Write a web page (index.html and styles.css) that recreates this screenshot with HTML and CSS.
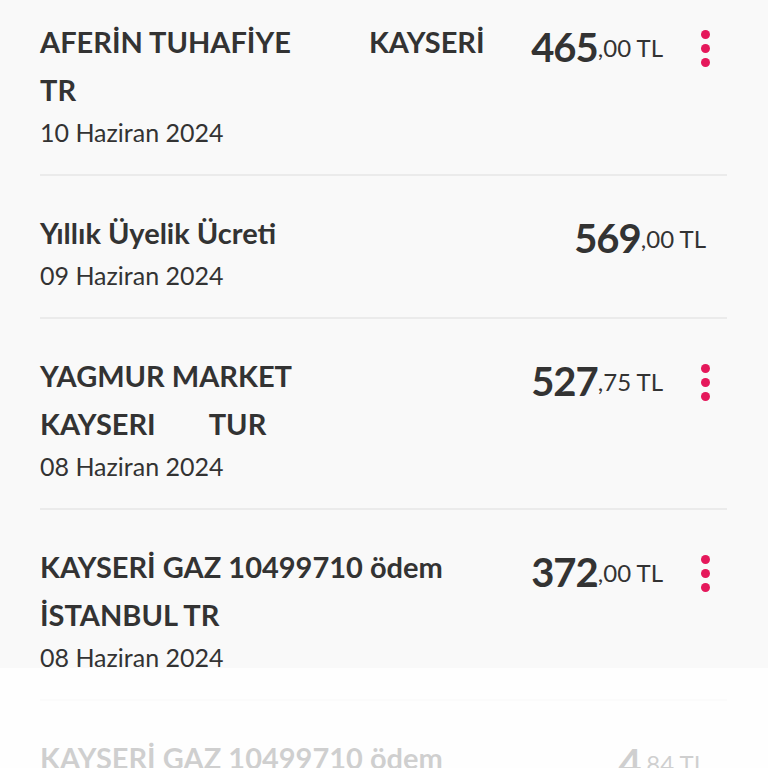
FILE: index.html
```html
<!DOCTYPE html>
<html lang="tr">
<head>
<meta charset="utf-8">
<link rel="stylesheet" href="styles.css">
</head>
<body>
<div class="screen">
  <ul class="list">
    <li class="row">
      <div class="info">
        <div class="title">AFERİN TUHAFİYE<span class="sp"></span>KAYSERİ<br>TR</div>
        <div class="date">10 Haziran 2024</div>
      </div>
      <div class="amount"><span class="int">465</span><span class="dec">,00 TL</span></div>
      <button class="more" aria-label="Diğer"><i></i><i></i><i></i></button>
    </li>
    <li class="row">
      <div class="info">
        <div class="title">Yıllık Üyelik Ücreti</div>
        <div class="date">09 Haziran 2024</div>
      </div>
      <div class="amount solo"><span class="int">569</span><span class="dec">,00 TL</span></div>
    </li>
    <li class="row">
      <div class="info">
        <div class="title">YAGMUR MARKET<br>KAYSERI<span class="sp2"></span>TUR</div>
        <div class="date">08 Haziran 2024</div>
      </div>
      <div class="amount"><span class="int">527</span><span class="dec">,75 TL</span></div>
      <button class="more" aria-label="Diğer"><i></i><i></i><i></i></button>
    </li>
    <li class="row">
      <div class="info">
        <div class="title">KAYSERİ GAZ 10499710 ödem<br>İSTANBUL TR</div>
        <div class="date">08 Haziran 2024</div>
      </div>
      <div class="amount"><span class="int">372</span><span class="dec">,00 TL</span></div>
      <button class="more" aria-label="Diğer"><i></i><i></i><i></i></button>
    </li>
    <li class="row">
      <div class="info">
        <div class="title">KAYSERİ GAZ 10499710 ödem<br>İSTANBUL TR</div>
        <div class="date">08 Haziran 2024</div>
      </div>
      <div class="amount solo"><span class="int">4</span><span class="dec">,84 TL</span></div>
    </li>
  </ul>
  <div class="fade"></div>
</div>
</body>
</html>
```
FILE: styles.css
```css
* { box-sizing: border-box; }
html, body { margin: 0; padding: 0; }
body {
  background: #f9f9f9;
  font-family: Lato, "Noto Sans", sans-serif;
  color: #333333;
  width: 768px;
  height: 768px;
  overflow: hidden;
}
.screen {
  position: relative;
  width: 768px;
  height: 768px;
  overflow: hidden;
}
.list {
  list-style: none;
  margin: -15px 41px 0 40px;
  padding: 0;
}
.row {
  display: flex;
  align-items: flex-start;
  padding: 33px 0 21px;
  border-bottom: 2px solid #ebebeb;
}
.info {
  flex: 1;
  min-width: 0;
}
.title {
  font-size: 29px;
  font-weight: 700;
  line-height: 48px;
  white-space: nowrap;
}
.sp { display: inline-block; width: 78px; }
.sp2 { display: inline-block; width: 53px; }
.date {
  margin-top: -3px;
  font-size: 25px;
  line-height: 42px;
  font-weight: 400;
}
.amount {
  display: flex;
  align-items: center;
  height: 48px;
  margin: 5px 21px 0 0;
  white-space: nowrap;
}
.amount .int {
  font-size: 40px;
  font-weight: 700;
  letter-spacing: -1px;
}
.amount .dec {
  font-size: 24px;
  font-weight: 400;
}
.more {
  width: 43px;
  height: 48px;
  margin-top: 6px;
  padding: 0;
  border: 0;
  background: none;
  display: flex;
  flex-direction: column;
  align-items: center;
  justify-content: center;
  gap: 5px;
}
.more i {
  width: 9px;
  height: 9px;
  border-radius: 50%;
  background: #e5185b;
}
.fade {
  position: absolute;
  left: 0;
  right: 0;
  top: 668px;
  bottom: 0;
  background: rgba(255, 255, 255, 0.77);
}
```
